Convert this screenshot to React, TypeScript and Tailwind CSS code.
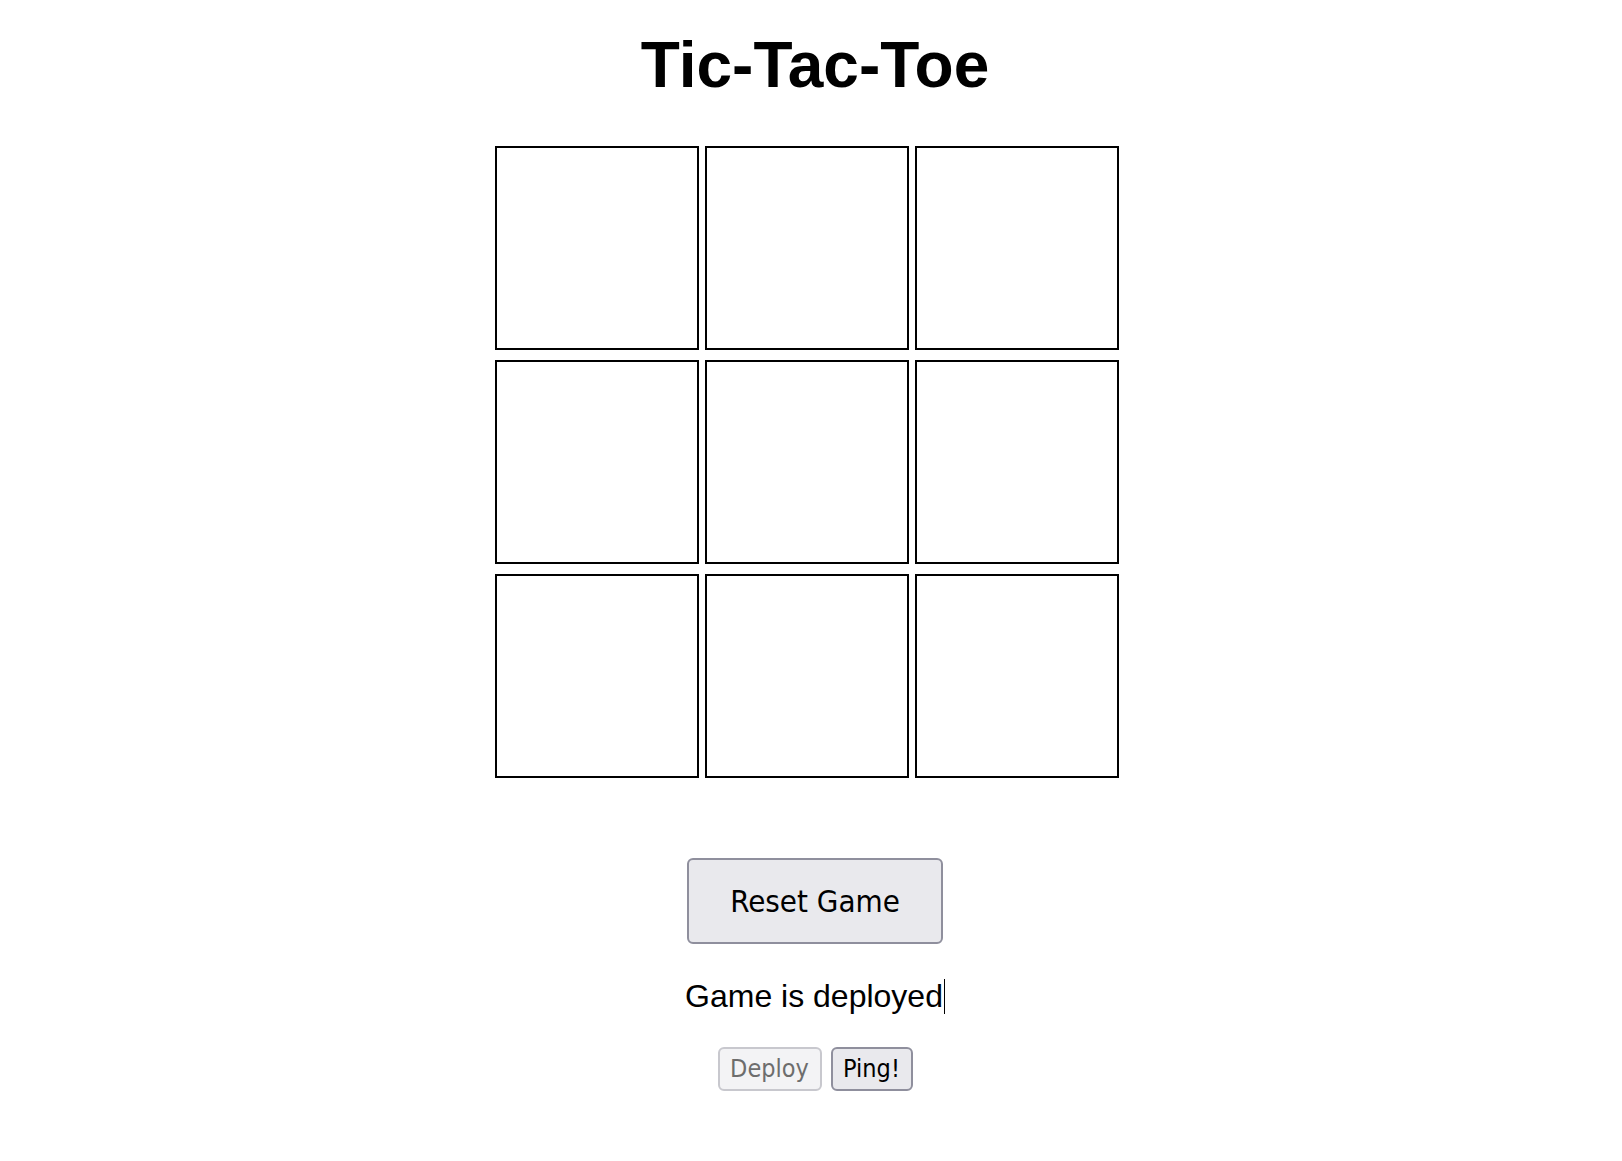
import React, { useState } from "react";

const cellIds = [0, 1, 2, 3, 4, 5, 6, 7, 8];

function Board({ cells, onPlay }: { cells: string[]; onPlay: (i: number) => void }) {
  return (
    <div className="mr-4 grid grid-cols-[repeat(3,204px)] gap-x-[6px] gap-y-[10px]">
      {cellIds.map((i) => (
        <button
          key={i}
          onClick={() => onPlay(i)}
          className="h-[204px] w-[204px] border-2 border-black bg-white text-[96px] font-bold font-['Liberation_Sans',Arial,sans-serif]"
        >
          {cells[i]}
        </button>
      ))}
    </div>
  );
}

export default function App() {
  const [cells, setCells] = useState<string[]>(Array(9).fill(""));
  const [turn, setTurn] = useState("X");

  const play = (i: number) => {
    if (cells[i]) return;
    const next = [...cells];
    next[i] = turn;
    setCells(next);
    setTurn(turn === "X" ? "O" : "X");
  };

  const reset = () => {
    setCells(Array(9).fill(""));
    setTurn("X");
  };

  return (
    <div className="flex min-h-screen flex-col items-center bg-white pl-2 text-black">
      <h1 className="mt-[33px] text-[64px] leading-[64px] font-bold font-['Liberation_Sans',Arial,sans-serif]">
        Tic-Tac-Toe
      </h1>

      <div className="mt-[49px]">
        <Board cells={cells} onPlay={play} />
      </div>

      <button
        onClick={reset}
        className="mt-[80px] h-[86px] w-[256px] rounded-[6px] border-2 border-[#8f8f9d] bg-[#e9e9ed] text-[31px] font-['DejaVu_Sans',sans-serif] font-stretch-condensed text-black"
      >
        Reset Game
      </button>

      <div className="mt-[35px] flex h-[35px] items-center font-['Liberation_Sans',Arial,sans-serif] text-[32px] leading-[35px]">
        <span>Game is deployed</span>
        <span className="ml-[1px] h-[35px] w-[1px] bg-black" />
      </div>

      <div className="mt-[33px] flex gap-[9px] font-['DejaVu_Sans',sans-serif] font-stretch-condensed text-[25px]">
        <button
          disabled
          className="h-[44px] w-[104px] rounded-[6px] border-2 border-[#c8c8ce] bg-[#f3f3f5] text-[#6d6d6d]"
        >
          Deploy
        </button>
        <button className="h-[44px] w-[82px] rounded-[6px] border-2 border-[#8f8f9d] bg-[#e9e9ed] text-black">
          Ping!
        </button>
      </div>
    </div>
  );
}
